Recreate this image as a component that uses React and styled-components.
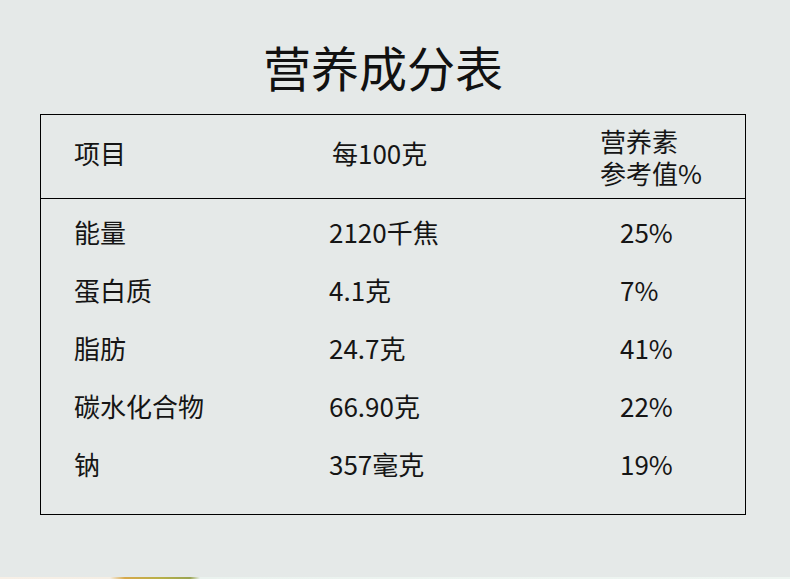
import React from "react";
import styled, { createGlobalStyle } from "styled-components";

const GlobalStyle = createGlobalStyle`
  html, body { margin: 0; padding: 0; background: #e5e9e8; }
  body { font-family: "Noto Sans CJK SC", "Noto Sans", sans-serif; color: #111; }
`;

const Page = styled.div`
  width: 790px;
  height: 579px;
  display: flex;
  flex-direction: column;
  background: #e5e9e8;
  overflow: hidden;
`;

const Title = styled.h1`
  margin: 0;
  padding: 38px 0 0 263px;
  height: 114px;
  box-sizing: border-box;
  font-size: 48px;
  font-weight: 400;
  line-height: 1.2;
  color: #111;
  letter-spacing: 0;
`;

const Table = styled.div`
  margin-left: 40px;
  width: 706px;
  height: 401px;
  box-sizing: border-box;
  border: 1px solid #000;
  display: flex;
  flex-direction: column;
`;

const Row = styled.div`
  display: grid;
  grid-template-columns: 255px 271px 1fr;
  align-items: center;
  padding-left: 33px;
  height: ${(p) => p.$h}px;
  font-size: 26px;
  line-height: 32px;
  color: #151515;
`;

const HeaderRow = styled(Row)`
  border-bottom: 1px solid #000;
  flex: none;
`;

const Body = styled.div`
  padding-top: 4px;
  display: flex;
  flex-direction: column;
`;

const Cell = styled.div`
  padding-left: ${(p) => p.$indent || 0}px;
  margin-bottom: ${(p) => (p.$raise ? 8 : 0)}px;
  white-space: pre-line;
`;

const Strip = styled.div`
  margin-top: auto;
  height: 2px;
  background: linear-gradient(
    90deg,
    #f7efe6 0px,
    #f5eee4 110px,
    #d6a84a 125px,
    #b8b048 160px,
    #9aa452 190px,
    #eaf2ee 200px,
    #eef5f1 790px
  );
`;

const rows = [
  ["能量", "2120千焦", "25%"],
  ["蛋白质", "4.1克", "7%"],
  ["脂肪", "24.7克", "41%"],
  ["碳水化合物", "66.90克", "22%"],
  ["钠", "357毫克", "19%"],
];

export default function App() {
  return (
    <Page>
      <GlobalStyle />
      <Title>营养成分表</Title>
      <Table>
        <HeaderRow $h={83}>
          <Cell $raise>项目</Cell>
          <Cell $raise $indent={3}>每100克</Cell>
          <Cell>{"营养素\n参考值%"}</Cell>
        </HeaderRow>
        <Body>
          {rows.map((r) => (
            <Row key={r[0]} $h={58}>
              <Cell>{r[0]}</Cell>
              <Cell>{r[1]}</Cell>
              <Cell $indent={20}>{r[2]}</Cell>
            </Row>
          ))}
        </Body>
      </Table>
      <Strip />
    </Page>
  );
}
